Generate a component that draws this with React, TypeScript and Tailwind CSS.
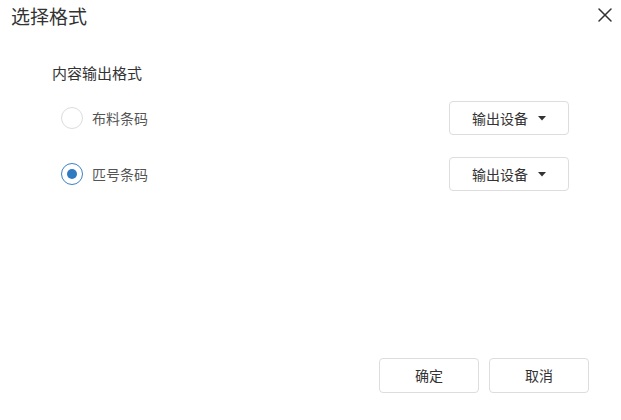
import React, { useState } from 'react';
import { X } from 'lucide-react';

const font = { fontFamily: '"Noto Sans CJK SC", "Noto Sans", sans-serif' };

function Radio({ checked, onClick }: { checked: boolean; onClick: () => void }) {
  return (
    <button
      onClick={onClick}
      className={`flex h-[22px] w-[22px] items-center justify-center rounded-full border bg-white ${
        checked ? 'border-[#3b82c4]' : 'border-[#dcdcdc]'
      }`}
    >
      {checked && <span className="h-[10px] w-[10px] rounded-full bg-[#2f7bc1]" />}
    </button>
  );
}

function DeviceButton() {
  return (
    <button className="flex h-[34px] w-[120px] items-center justify-center gap-[10px] rounded-[4px] border border-[#dddddd] bg-white text-[14px] text-[#333]">
      <span>输出设备</span>
      <svg width="8" height="5" viewBox="0 0 8 5" className="mt-[1px]">
        <path d="M0 0h8L4 4.5z" fill="#333" />
      </svg>
    </button>
  );
}

export default function App() {
  const [format, setFormat] = useState('piece');

  const rows = [
    { id: 'cloth', label: '布料条码' },
    { id: 'piece', label: '匹号条码' },
  ];

  return (
    <div className="flex h-[420px] w-[621px] flex-col bg-white" style={font}>
      <div className="flex h-[30px] items-center justify-between pl-[11px] pr-[4px]">
        <h2 className="text-[19px] leading-none text-[#333]">选择格式</h2>
        <button className="text-[#333]">
          <X size={24} strokeWidth={1.5} />
        </button>
      </div>

      <div className="pl-[52px] pt-[34px]">
        <p className="text-[15px] leading-[18px] text-[#333]">内容输出格式</p>
        <div className="mt-[19px] flex flex-col gap-[22px] pl-[9px]">
          {rows.map((r) => (
            <div key={r.id} className="flex h-[34px] items-center">
              <Radio checked={format === r.id} onClick={() => setFormat(r.id)} />
              <span className="ml-[9px] text-[14px] text-[#555]">{r.label}</span>
              <div className="ml-auto mr-[52px]">
                <DeviceButton />
              </div>
            </div>
          ))}
        </div>
      </div>

      <div className="mt-auto flex justify-end gap-[10px] pb-[27px] pr-[32px]">
        <button className="h-[35px] w-[100px] rounded-[4px] border border-[#dddddd] bg-white text-[14px] text-[#333]">
          确定
        </button>
        <button className="h-[35px] w-[100px] rounded-[4px] border border-[#dddddd] bg-white text-[14px] text-[#333]">
          取消
        </button>
      </div>
    </div>
  );
}
